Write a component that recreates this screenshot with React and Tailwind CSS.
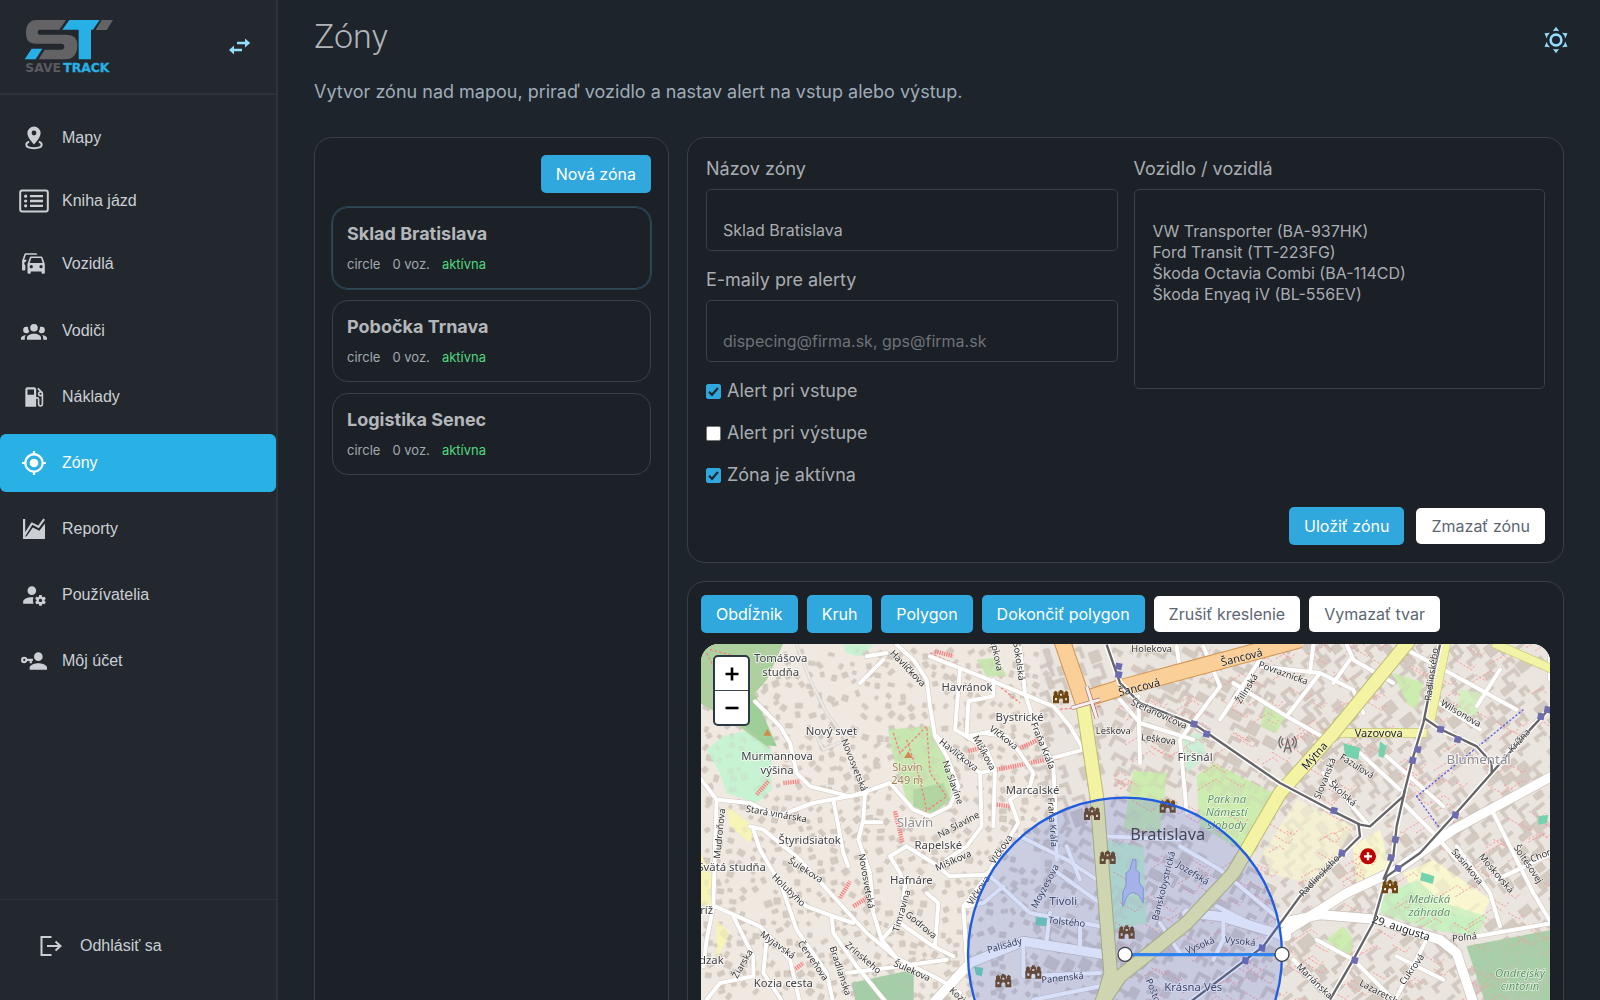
import { useState } from 'react'
import clsx from 'clsx'

const ICONS = {
  cars: 'M8 11L9.5 6.5H18.5L20 11M18.5 16A1.5 1.5 0 0 1 17 14.5A1.5 1.5 0 0 1 18.5 13A1.5 1.5 0 0 1 20 14.5A1.5 1.5 0 0 1 18.5 16M9.5 16A1.5 1.5 0 0 1 8 14.5A1.5 1.5 0 0 1 9.5 13A1.5 1.5 0 0 1 11 14.5A1.5 1.5 0 0 1 9.5 16M19.92 6C19.71 5.4 19.14 5 18.5 5H9.5C8.86 5 8.29 5.4 8.08 6L6 12V20A1 1 0 0 0 7 21H8A1 1 0 0 0 9 20V19H19V20A1 1 0 0 0 20 21H21A1 1 0 0 0 22 20V12L19.92 6M14.92 3C14.71 2.4 14.14 2 13.5 2H4.5C3.86 2 3.29 2.4 3.08 3L1 9V17A1 1 0 0 0 2 18H3A1 1 0 0 0 4 17V12.91C3.22 12.63 2.82 11.77 3.1 11C3.32 10.4 3.87 10 4.5 10H4.57L5.27 8H3L4.5 3.5H15.09L14.92 3Z',
  group: 'M12,5.5A3.5,3.5 0 0,1 15.5,9A3.5,3.5 0 0,1 12,12.5A3.5,3.5 0 0,1 8.5,9A3.5,3.5 0 0,1 12,5.5M5,8C5.56,8 6.08,8.15 6.53,8.42C6.38,9.85 6.8,11.27 7.66,12.38C7.16,13.34 6.16,14 5,14A3,3 0 0,1 2,11A3,3 0 0,1 5,8M19,8A3,3 0 0,1 22,11A3,3 0 0,1 19,14C17.84,14 16.84,13.34 16.34,12.38C17.2,11.27 17.62,9.85 17.47,8.42C17.92,8.15 18.44,8 19,8M5.5,18.25C5.5,16.18 8.41,14.5 12,14.5C15.59,14.5 18.5,16.18 18.5,18.25V20H5.5V18.25M0,20V18.5C0,17.11 1.89,15.94 4.45,15.6C3.86,16.28 3.5,17.22 3.5,18.25V20H0M24,20H20.5V18.25C20.5,17.22 20.14,16.28 19.55,15.6C22.11,15.94 24,17.11 24,18.5V20Z',
  fuel: 'M18,10A1,1 0 0,1 17,9A1,1 0 0,1 18,8A1,1 0 0,1 19,9A1,1 0 0,1 18,10M12,10H6V5H12M19.77,7.23L19.78,7.22L16.06,3.5L15,4.56L17.11,6.67C16.17,7 15.5,7.93 15.5,9A2.5,2.5 0 0,0 18,11.5C18.36,11.5 18.69,11.42 19,11.29V18.5A1,1 0 0,1 18,19.5A1,1 0 0,1 17,18.5V14A2,2 0 0,0 15,12H14V5A2,2 0 0,0 12,3H6A2,2 0 0,0 4,5V21H14V13.5H15.5V18.5A2.5,2.5 0 0,0 18,21A2.5,2.5 0 0,0 20.5,18.5V9C20.5,8.31 20.22,7.68 19.77,7.23Z',
  target: 'M12,8A4,4 0 0,1 16,12A4,4 0 0,1 12,16A4,4 0 0,1 8,12A4,4 0 0,1 12,8M3.05,13H1V11H3.05C3.5,6.83 6.83,3.5 11,3.05V1H13V3.05C17.17,3.5 20.5,6.83 20.95,11H23V13H20.95C20.5,17.17 17.17,20.5 13,20.95V23H11V20.95C6.83,20.5 3.5,17.17 3.05,13M12,5A7,7 0 0,0 5,12A7,7 0 0,0 12,19A7,7 0 0,0 19,12A7,7 0 0,0 12,5Z',
  chart: 'M1 2H3.2V15L9.6 5.2L16.2 8.6L21.4 1.6L23 2.8L16.8 11.2L10.4 7.8L3.2 19.2V19.8L4.8 19L10.8 10.6L17.4 13.8L23 6.6V22H1Z',
  userCog: 'M10 4A4 4 0 0 0 6 8A4 4 0 0 0 10 12A4 4 0 0 0 14 8A4 4 0 0 0 10 4M17 12C16.87 12 16.76 12.09 16.74 12.21L16.55 13.53C16.25 13.66 15.96 13.82 15.7 14L14.46 13.5C14.35 13.5 14.22 13.5 14.15 13.63L13.15 15.36C13.09 15.47 13.11 15.6 13.21 15.68L14.27 16.5C14.25 16.67 14.24 16.83 14.24 17C14.24 17.17 14.25 17.33 14.27 17.5L13.21 18.32C13.12 18.4 13.09 18.53 13.15 18.64L14.15 20.37C14.21 20.5 14.34 20.5 14.46 20.5L15.7 20C15.96 20.18 16.24 20.35 16.55 20.47L16.74 21.79C16.76 21.91 16.86 22 17 22H19C19.11 22 19.22 21.91 19.24 21.79L19.43 20.47C19.73 20.34 20 20.18 20.27 20L21.5 20.5C21.63 20.5 21.76 20.5 21.83 20.37L22.83 18.64C22.89 18.53 22.86 18.4 22.77 18.32L21.7 17.5C21.72 17.33 21.74 17.17 21.74 17C21.74 16.83 21.73 16.67 21.7 16.5L22.76 15.68C22.85 15.6 22.88 15.47 22.82 15.36L21.82 13.63C21.76 13.5 21.63 13.5 21.5 13.5L20.27 14C20 13.82 19.73 13.65 19.42 13.53L19.23 12.21C19.22 12.09 19.11 12 19 12H17M10 14C5.58 14 2 15.79 2 18V20H11.68A7 7 0 0 1 11 17A7 7 0 0 1 11.64 14.09C11.11 14.03 10.56 14 10 14M18 15.5C18.83 15.5 19.5 16.17 19.5 17C19.5 17.83 18.83 18.5 18 18.5C17.16 18.5 16.5 17.83 16.5 17C16.5 16.17 17.17 15.5 18 15.5Z',
  userKey: 'M11 10V12H10V14H8V12H5.83C5.42 13.17 4.31 14 3 14A3 3 0 0 1 0 11A3 3 0 0 1 3 8C4.31 8 5.42 8.83 5.83 10H11M3 10A1 1 0 0 0 2 11A1 1 0 0 0 3 12A1 1 0 0 0 4 11A1 1 0 0 0 3 10M16 14C18.67 14 24 15.34 24 18V20H8V18C8 15.34 13.33 14 16 14M16 12A4 4 0 0 1 12 8A4 4 0 0 1 16 4A4 4 0 0 1 20 8A4 4 0 0 1 16 12Z',
  sun: 'M12,7A5,5 0 0,1 17,12A5,5 0 0,1 12,17A5,5 0 0,1 7,12A5,5 0 0,1 12,7M12,9A3,3 0 0,0 9,12A3,3 0 0,0 12,15A3,3 0 0,0 15,12A3,3 0 0,0 12,9M12,2L14.39,5.42C13.65,5.15 12.84,5 12,5C11.16,5 10.35,5.15 9.61,5.42L12,2M3.34,7L7.5,6.65C6.9,7.16 6.36,7.78 5.94,8.5C5.5,9.24 5.25,10 5.11,10.79L3.34,7M3.36,17L5.12,13.23C5.26,14 5.53,14.78 5.95,15.5C6.37,16.24 6.91,16.86 7.5,17.37L3.36,17M20.65,7L18.88,10.79C18.74,10 18.47,9.23 18.05,8.5C17.63,7.78 17.1,7.15 16.5,6.64L20.65,7M20.64,17L16.5,17.36C17.09,16.85 17.62,16.22 18.04,15.5C18.46,14.77 18.73,14 18.87,13.21L20.64,17M12,22L9.59,18.56C10.33,18.83 11.14,19 12,19C12.82,19 13.63,18.83 14.37,18.56L12,22Z',
}

function Icon({ name, className = 'size-[26px]' }) {
  return (
    <svg viewBox="0 0 24 24" fill="currentColor" className={className} aria-hidden="true">
      <path d={ICONS[name]} />
    </svg>
  )
}

function PinIcon() {
  return (
    <svg viewBox="0 0 18 24" fill="none" className="h-6 w-[18px]" aria-hidden="true">
      <path
        fill="currentColor"
        fillRule="evenodd"
        d="M9 0.5A6.6 6.6 0 0 1 15.6 7.1C15.6 11 12 15.2 9 18.6C6 15.2 2.4 11 2.4 7.1A6.6 6.6 0 0 1 9 .5M9 4.6A2.4 2.4 0 1 0 9 9.4A2.4 2.4 0 1 0 9 4.6Z"
      />
      <path d="M4.2 15.6C2.4 16.2 1.3 17.3 1.3 18.6C1.3 20.8 4.7 22.2 9 22.2S16.7 20.8 16.7 18.6C16.7 17.3 15.6 16.2 13.8 15.6" stroke="currentColor" strokeWidth="2" />
    </svg>
  )
}

function ListIcon() {
  return (
    <svg viewBox="0 0 30 24" fill="none" stroke="currentColor" className="h-6 w-[30px]" aria-hidden="true">
      <rect x="1.2" y="1.5" width="27.6" height="21" rx="2" strokeWidth="2" />
      <path d="M11 7.2H24M11 12H24M11 16.8H24" strokeWidth="2.3" />
      <path d="M6.6 7.2h.1M6.6 12h.1M6.6 16.8h.1" strokeWidth="3.2" strokeLinecap="round" />
    </svg>
  )
}

const NAV = [
  [
    { label: 'Mapy', icon: <PinIcon /> },
    { label: 'Kniha jázd', icon: <ListIcon /> },
    { label: 'Vozidlá', icon: <Icon name="cars" /> },
  ],
  [
    { label: 'Vodiči', icon: <Icon name="group" /> },
    { label: 'Náklady', icon: <Icon name="fuel" /> },
    { label: 'Zóny', icon: <Icon name="target" />, active: true },
    { label: 'Reporty', icon: <Icon name="chart" className="size-6" /> },
    { label: 'Používatelia', icon: <Icon name="userCog" /> },
    { label: 'Môj účet', icon: <Icon name="userKey" /> },
  ],
]

const ZONES = ['Sklad Bratislava', 'Pobočka Trnava', 'Logistika Senec']

const VEHICLES = [
  'VW Transporter (BA-937HK)',
  'Ford Transit (TT-223FG)',
  'Škoda Octavia Combi (BA-114CD)',
  'Škoda Enyaq iV (BL-556EV)',
]

function Logo() {
  return (
    <svg viewBox="72 56 276 174" className="h-[58px] w-[92px]" role="img" aria-label="SaveTrack">
      <path fill="#636366" d="M198 62L178 91H119C111 91 111 106 119 106H196C222 106 232 118 232 138C232 162 222 180 196 180H116L134 151H184C196 151 196 133 184 133H108C86 133 78 122 78 102C78 76 88 62 112 62Z" />
      <path fill="#27b0e6" d="M208 62H299L279 91H273V180H236V91H187Z" />
      <path fill="#636366" d="M305 62H339L320 92H287Z" />
      <path fill="#27b0e6" d="M95 148H127L107 180H74Z" />
      <g fontFamily="DejaVu Sans" fontWeight="700" fontSize="37">
        <text x="76" y="217" fill="#5b5b5f">SAVE</text>
        <text x="190" y="217" fill="#27b0e6" stroke="#27b0e6" strokeWidth="1">TRACK</text>
      </g>
    </svg>
  )
}

function Sidebar() {
  return (
    <aside className="flex w-[278px] shrink-0 flex-col border-r-2 border-[#2e333b] bg-[#23282f] font-['Liberation_Sans',Arial,sans-serif] text-base text-[#cbcfd4]">
      <div className="flex h-[95px] items-center justify-between border-b-2 border-[#2e333b] px-6">
        <Logo />
        <button type="button" aria-label="Zbaliť menu" className="text-[#94dcfb]">
          <svg viewBox="0 0 24 18" fill="currentColor" className="h-[18px] w-6">
            <path d="M9 3.7H17V.5L22.2 5L17 9.5V6.3H9ZM14 10.7H6V7.5L1 12L6 16.5V13.3H14Z" />
          </svg>
        </button>
      </div>
      <nav className="flex flex-1 flex-col gap-[11px] pt-[15px]">
        {NAV.map((items, i) => (
          <div key={i} className="flex flex-col gap-2">
            {items.map((item) => (
              <a
                key={item.label}
                href="#"
                className={clsx(
                  'flex items-center rounded-md',
                  i === 0 ? 'h-[55px]' : 'h-[58px]',
                  item.active && 'bg-[#29b1e6] text-white'
                )}
              >
                <span className="flex w-[62px] shrink-0 justify-center pl-1.5">{item.icon}</span>
                {item.label}
              </a>
            ))}
          </div>
        ))}
      </nav>
      <div className="flex h-[101px] items-center border-t border-[#2e333b] pb-2 pl-10">
        <a href="#" className="flex items-center gap-4">
          <svg viewBox="0 0 24 24" fill="none" stroke="currentColor" strokeWidth="2" className="size-6">
            <path d="M11.5 3H1.5V21H11.5M7 12H20.5M15.5 7.5L20.5 12L15.5 16.5" />
          </svg>
          Odhlásiť sa
        </a>
      </div>
    </aside>
  )
}

function Button({ light, children }) {
  return (
    <button
      type="button"
      className={clsx(
        'rounded-[5px] px-[15px] text-base',
        light ? 'h-9 bg-white text-[#5d6673]' : 'h-[38px] bg-[#30a7dd] text-white'
      )}
    >
      {children}
    </button>
  )
}

function ZoneList() {
  return (
    <section className="w-[355px] shrink-0 rounded-[18px] border border-[#3a4047] bg-[#1c2127] p-[17px]">
      <div className="flex justify-end">
        <Button>Nová zóna</Button>
      </div>
      <ul className="mt-[14px] flex flex-col gap-[11px]">
        {ZONES.map((name, i) => (
          <li key={name}>
            <button
              type="button"
              className={clsx(
                'flex h-[82px] w-full flex-col justify-center gap-2 rounded-2xl border px-[14px] text-left',
                i === 0 ? 'border-[#2f4b5b] ring-1 ring-[#2a3f4c]' : 'border-[#3a4047]'
              )}
            >
              <strong className="text-lg leading-6 font-bold text-[#b4b7ba]">{name}</strong>
              <span className="flex gap-3 text-[13px] leading-5 text-[#a2a9b1]">
                <span>circle</span>
                <span>0 voz.</span>
                <span className="text-[#4fd67c]">aktívna</span>
              </span>
            </button>
          </li>
        ))}
      </ul>
    </section>
  )
}

function TextField({ id, label, ...props }) {
  return (
    <div>
      <label htmlFor={id} className="block h-8 text-lg leading-6">{label}</label>
      <input
        id={id}
        type="text"
        className="block h-[62px] w-full rounded-[5px] border border-[#3a4047] bg-[#1b1f26] px-4 pt-5 text-base text-[#a9adb2] placeholder:text-[#6d7279]"
        {...props}
      />
    </div>
  )
}

function CheckField({ label, checked }) {
  const [on, setOn] = useState(checked)
  return (
    <label className="flex h-6 items-center gap-1.5 text-lg">
      <span className="relative flex size-[15px]">
        <input
          type="checkbox"
          checked={on}
          onChange={() => setOn(!on)}
          className="size-[15px] appearance-none rounded-xs border border-[#767676] bg-white checked:border-[#30a7dd] checked:bg-[#30a7dd]"
        />
        {on && (
          <svg viewBox="0 0 15 15" fill="none" stroke="#1c2933" strokeWidth="2.2" className="pointer-events-none absolute inset-0">
            <path d="M3 7.8L6 10.8L12 4" />
          </svg>
        )}
      </span>
      {label}
    </label>
  )
}

function ZoneForm() {
  const [name, setName] = useState('Sklad Bratislava')
  return (
    <form className="rounded-[18px] border border-[#3a4047] bg-[#1c2127] px-[18px] pt-[19px] pb-[17px] text-[#a9adb2]">
      <div className="grid grid-cols-2 gap-4">
        <div>
          <TextField id="zone-name" label="Názov zóny" value={name} onChange={(e) => setName(e.target.value)} />
          <div className="mt-[17px]">
            <TextField id="zone-mails" label="E-maily pre alerty" placeholder="dispecing@firma.sk, gps@firma.sk" />
          </div>
          <div className="mt-[17px] flex flex-col gap-[18px]">
            <CheckField label="Alert pri vstupe" checked />
            <CheckField label="Alert pri výstupe" checked={false} />
            <CheckField label="Zóna je aktívna" checked />
          </div>
        </div>
        <div>
          <label htmlFor="zone-cars" className="block h-8 text-lg leading-6">Vozidlo / vozidlá</label>
          <select
            id="zone-cars"
            multiple
            className="block h-[200px] w-full rounded-[5px] border border-[#3a4047] bg-[#1b1f26] px-4 pt-[31px] text-base leading-[21px] [scrollbar-width:none]"
          >
            {VEHICLES.map((v) => (
              <option key={v} className="h-[21px] px-0.5">{v}</option>
            ))}
          </select>
        </div>
      </div>
      <div className="mt-5 flex items-center justify-end gap-3">
        <Button>Uložiť zónu</Button>
        <Button light>Zmazať zónu</Button>
      </div>
    </form>
  )
}

// ---- map ----

function random(seed) {
  let s = seed
  return () => {
    s = (s * 16807) % 2147483647
    return s / 2147483647
  }
}

function makeBuildings() {
  const rnd = random(77)
  const out = []
  for (let y = 30; y < 1380; y += 31) {
    for (let x = 10; x < 1050; x += 34) {
      if (rnd() < 0.25) continue
      const w = Math.round(9 + rnd() * 12)
      const h = Math.round(9 + rnd() * 10)
      out.push({ x: x + rnd() * 14, y: y + rnd() * 14, r: Math.round(rnd() * 90 - 45), d: `h${w}v${h}h${-w}z` })
    }
  }
  // the dense centre is made of L-shaped and courtyard blocks
  for (let y = 20; y < 1380; y += 44) {
    for (let x = 1040; x < 2560; x += 50) {
      const kind = rnd()
      if (kind < 0.14) continue
      const w = Math.round(24 + rnd() * 26)
      const h = Math.round(16 + rnd() * 22)
      const t = 9
      const d =
        kind < 0.5
          ? `h${w}v${t}h${t - w}v${h - t}h${-t}z`
          : kind < 0.75
            ? `h${w}v${h}h${-t}v${t - h}h${2 * t - w}v${h - t}h${-t}z`
            : `h${w}v${h}h${-w}z`
      const r = x > 1700 ? -38 : x < 1230 && y < 520 ? 70 : 28
      out.push({ x: x + rnd() * 16, y: y + rnd() * 12, r, d })
    }
  }
  return out
}

function makePaths() {
  const rnd = random(1234)
  const out = []
  for (let i = 0; i < 380; i++) {
    const x = 1230 + rnd() * 1330
    const y = 10 + rnd() * 1350
    const dx = 20 + rnd() * 38
    const dy = dx * 0.6
    out.push(rnd() < 0.5 ? `M${x} ${y}l${dx} ${dy}l14 -16` : `M${x} ${y}l${dx} ${-dy}l18 14`)
  }
  return out.join('')
}

const BUILDINGS = makeBuildings()
const FOOTPATHS = makePaths()

const STREETS = [
  'M165 185L240 260L270 310L290 400L330 440L450 470L500 455L570 430L640 510L690 530L750 500L775 440L740 350L705 290L690 200L680 120L640 60L590 15',
  'M0 415L50 480L150 490L230 530L340 490L500 460',
  'M495 460L490 540L475 600L510 700L520 820L545 900L590 955M490 548H545',
  'M150 560L190 570L300 660L400 770L500 880L590 955L720 1020L780 1060',
  'M160 570L180 630L245 740L290 870L380 1000L400 1090',
  'M245 740L320 800L400 830L460 850M395 830L400 880L470 980L560 1090',
  'M50 480L45 620L40 800L20 900L10 980',
  'M45 800L180 860L270 960L300 1090M100 830L160 950L160 1010L60 1030L20 1080M200 900L190 1000L250 1090',
  'M710 290L840 400L845 560L800 620L740 660M885 390L880 560M840 400L885 390L860 330L800 290',
  'M780 90L765 270L800 290L870 275M805 185L800 290M805 185L880 170V120',
  'M690 50L880 125L1060 200L1110 260L1150 330L1040 360',
  'M960 20L975 160L1000 240L1060 380L1065 480L1070 660',
  'M850 280L920 290L960 340L1000 400L990 440L930 480L955 550L900 640L860 710L790 800L800 960',
  'M620 620L700 670L750 710L860 705M620 620L570 650L600 700L615 740L600 840L545 900',
  'M600 850L700 920L760 950M680 760L715 790L705 920M550 60L480 130M560 40L500 50',
  'M400 480L430 640L445 680M740 960L560 985L440 1000',
  'M960 590L1100 660L1190 720M1100 620L1140 720M860 700L990 820L1200 860M1060 690L1200 790M1050 820L1040 900M1140 850V920',
  'M970 900V1010L1200 1000M1000 1080L1200 1040M1215 590L1440 600M800 800L850 790L910 740',
  'M1430 20L1440 90M1320 370L1315 170M1510 20L1560 140L1440 300L1460 520',
  'M1260 180L1320 250L1480 300M1680 60L1560 240M1860 100L1760 230M1680 80L1860 100L1960 150L1990 220',
  'M1600 130L1760 230L1900 310M1840 15L1830 100M1950 60L1900 130M1940 15L1960 60L2080 130',
  'M2120 30L2250 100L2450 210M2400 90L2330 200M2200 180L2340 270M2060 350L2230 500M1980 340L2100 450M1870 400L2000 550',
  'M2110 490L2200 580L2270 660M2270 620L2370 760L2400 860M2380 520L2500 760L2560 860M2390 720L2560 640M2330 890L2560 850',
  'M1440 620L1560 690L1740 840M1380 850L1440 940M1550 800L1750 900M1570 820V900L1540 960',
  'M1850 900L1960 960L2090 1090M1780 960L1900 1090M2180 900L2080 1090M2090 950L2230 1020M2550 20V120',
]

const MAIN_STREETS = [
  'M690 1100L810 970L970 905L1215 945',
  'M1750 880L1940 760L2090 690L2260 570L2555 410',
  'M1740 850L1860 825L2040 840L2120 870L2220 900L2270 940L2320 1090',
  'M1460 820L1560 830L1760 890',
]

const RAILS = [
  'M1220 15L1260 130L1320 190L1485 255L1740 430L1900 515L1980 555L2010 560L2110 470L2140 350L2170 250L2190 150L2220 15',
  'M1975 550L1980 590L1960 610L1800 770L1690 920L1480 1080L1380 1150',
  'M2172 235L2220 268L2330 320L2375 370V400L2260 530L2160 640L2060 710L2020 850L1960 960L1890 1080',
  'M2115 450L2090 560L2080 650L2050 720M2555 200L2490 270L2375 400',
]

const STOPS = [
  [1256, 80], [1256, 105], [1482, 253], [1520, 283], [1902, 513], [1926, 640], [2222, 269], [2273, 299], [2153, 329],
  [2138, 362], [2086, 600], [2073, 654], [2094, 686], [2266, 526], [2523, 230], [2543, 210], [1964, 962], [1636, 963], [1686, 925],
]

const CASTLES = [[1083, 172], [1176, 522], [1223, 654], [1280, 878], [1000, 998], [910, 1024], [1403, 500], [2070, 742]]

// x, y, text
const PLACES = [
  [242, 68, 'Tomášova'], [242, 110, 'studňa'], [394, 286, 'Nový svet'], [231, 361, 'Murmannova'], [231, 402, 'výšina'],
  [801, 153, 'Havránok'], [959, 244, 'Bystrické'], [998, 462, 'Marcalské'], [715, 627, 'Rapelské'],
  [329, 612, 'Štyridsiatok'], [95, 694, 'Svätá studňa'], [634, 733, 'Hafnáre'], [1090, 797, 'Tivoli'],
  [250, 1042, 'Kozia cesta'], [20, 822, 'ríž'], [34, 972, 'dzak'], [1485, 364, 'Firšnál'], [1480, 1054, 'Krásna Ves'],
]

// x, y, rotation, text
const STREET_NAMES = [
  [620, 90, 46, 'Havlíčkova'], [773, 350, 38, 'Havlíčkova'], [458, 378, 68, 'Novosvetská'], [494, 725, 80, 'Novosvetská'],
  [753, 430, 70, 'Na Slavíne'], [778, 560, -28, 'Na Slavíne'], [848, 342, 62, 'Mišíkova'], [762, 668, -24, 'Mišíkova'],
  [908, 298, 38, 'Vlčkova'], [908, 632, -56, 'Vlčkova'], [840, 755, -56, 'Vlčkova'], [1024, 320, 68, 'Fraňa Kráľa'],
  [1052, 548, 86, 'Fraňa Kráľa'], [228, 528, 10, 'Stará vinárska'], [64, 582, -84, 'Mudroňova'], [314, 696, 32, 'Šulekova'],
  [634, 998, 24, 'Šulekova'], [262, 755, 44, 'Holubyho'], [230, 920, 36, 'Myjavská'], [335, 966, 55, 'Červeňova'],
  [486, 958, 40, 'Zrínskeho'], [416, 995, 72, 'Bradlianska'], [132, 975, -60, 'Žiarska'], [610, 815, -74, 'Timravina'],
  [660, 860, 40, 'Godrova'], [1040, 742, -62, 'Moyzesova'], [1100, 852, 6, 'Tolstého'], [915, 922, -16, 'Palisády'],
  [1088, 1020, -6, 'Panenská'], [885, 48, 78, 'epkova'], [952, 66, 82, 'Sokolská'], [775, 1075, 42, 'Kozia'],
  [1355, 34, 0, 'Holekova'], [1375, 228, 24, 'Štefanovičova'], [1240, 280, 0, 'Leškova'], [1375, 304, 8, 'Leškova'],
  [1645, 150, -58, 'Žilinská'], [1748, 105, 20, 'Povraznícka'], [1880, 418, -68, 'Slovanská'], [1925, 465, 42, 'Školská'],
  [1968, 384, 32, 'Fazuľová'], [2200, 105, -82, 'Radlinského'], [2280, 226, 30, 'Wilsonova'], [2462, 306, -48, 'Krížna'],
  [1862, 712, -46, 'Radlinského'], [2298, 684, 50, 'Sasinkova'], [2385, 704, 50, 'Moskovská'], [2480, 676, 56, 'Šoltésovej'],
  [2294, 898, -6, 'Poľná'], [2140, 992, -54, 'Cukrová'], [1840, 1028, 44, 'Mariánska'], [2040, 1065, 28, 'Lazaretská'],
  [1396, 740, -76, 'Banskobystrická'], [1476, 705, 32, 'Jozefská'], [1502, 922, -22, 'Vysoká'], [1620, 910, 6, 'Vysoká'],
  [1360, 1068, 68, 'Poštová'], [2530, 650, -22, 'Chorv'],
]

const GREENS = [
  ['#add19e', 'M0 10H250L200 120L165 160L215 300L200 330L120 260L0 190Z'],
  ['#9bcf95', 'M90 220L165 170L230 320L195 315Z'],
  ['#c7f3d2', 'M20 330L70 290L135 275L215 330V450L170 490L80 460L60 400Z'],
  ['#c8e6b0', 'M565 270L690 260L720 330L755 390L750 480L690 525L620 480L580 350Z'],
  ['#add19e', 'M640 450L730 430L750 480L700 520L640 500Z'],
  ['#a5cda8', 'M455 1030L640 990L640 1100H470Z'],
  ['#cdebb0', 'M1300 395L1400 400L1380 580L1270 570Z'],
  ['#c9efc8', 'M1215 600L1330 620L1340 850L1240 870Z'],
  ['#cdebb0', 'M1490 410L1540 370L1720 460L1640 640L1500 560Z'],
  ['#cdeed6', 'M1450 290L1500 280L1520 350L1460 400Z'],
  ['#cdebb0', 'M1700 190L1760 220L1730 280L1680 260Z'],
  ['#f3f0d4', 'M1790 480L1960 560L1860 740L1710 700L1690 640Z'],
  ['#f8f6cf', 'M1960 620L2040 570L2070 690L1970 740Z'],
  ['#f8f6cf', 'M2110 700L2200 660L2370 780L2340 840L2170 800Z'],
  ['#c8f0c0', 'M2050 770L2150 720L2230 790L2360 830L2330 890L2200 870L2040 820Z'],
  ['#a9cfa8', 'M2300 920L2560 870V1100H2360Z'],
  ['#cdebb0', 'M1880 900L1930 860L1960 900L1950 960Z'],
  ['#d5efc0', 'M2280 150L2350 160L2330 230L2270 210Z'],
  ['#cdebb0', 'M2080 100L2170 130L2150 210L2120 190Z'],
  ['#c8e6b0', 'M830 60L890 55L920 110L860 110Z'],
  ['#c7f3d2', 'M430 15H520L480 50L440 40Z'],
  ['#f7f4b8', 'M80 500L160 560L150 610L90 560ZM3 640L40 720L30 810L3 790ZM50 840L90 880L50 960Z'],
]

function ZoneMap() {
  return (
    <svg viewBox="3 13 2547 1350" preserveAspectRatio="xMidYMin slice" className="h-[450px] w-full rounded-[18px]" role="img" aria-label="Mapa zóny">
      <rect x="-500" width="3600" height="1400" fill="#efe9e1" />
      <rect x="1020" width="1600" height="1400" fill="#ebe5df" />
      {GREENS.map(([fill, d]) => (
        <path key={d} d={d} fill={fill} />
      ))}
      <g fill="#cdc3bb" stroke="#b9aca2" strokeWidth="1.5" opacity="0.8">
        {BUILDINGS.map(({ x, y, r, d }, i) => (
          <path key={i} d={`M0 0${d}`} transform={`translate(${x} ${y}) rotate(${r})`} />
        ))}
      </g>
      {GREENS.map(([fill, d]) => (
        <path key={d} d={d} fill={fill} opacity="0.72" />
      ))}
      <path d={FOOTPATHS} fill="none" stroke="#f79a9a" strokeWidth="3" strokeDasharray="7 5" />
      <path d="M690 40L880 125L960 190M580 280L600 340L680 260L690 400L740 470L670 520M620 300L660 420L680 510M20 40L60 120L130 200M30 30L150 60M1200 200L1060 210" fill="none" stroke="#f47d7d" strokeWidth="4" strokeDasharray="8 6" />
      <path d="M170 465L205 425M250 430L300 425M805 335L840 325M890 390L1080 352M960 325L1020 298M890 495L930 500M585 515L608 610M420 775L450 725M460 800L500 775M270 1000L310 970M705 35L760 50" fill="none" stroke="#fa8080" strokeWidth="13" strokeDasharray="4 3" />

      <g fill="none" strokeLinejoin="round" strokeLinecap="round">
        {STREETS.map((d) => <path key={d} d={d} stroke="#cfc8c0" strokeWidth="15" />)}
        {MAIN_STREETS.map((d) => <path key={d} d={d} stroke="#c8c1ba" strokeWidth="32" />)}
        {STREETS.map((d) => <path key={d} d={d} stroke="#fff" strokeWidth="12" />)}
        {MAIN_STREETS.map((d) => <path key={d} d={d} stroke="#fff" strokeWidth="28" />)}
        <path d="M290 15L330 120L380 220L440 300L370 330L350 290" stroke="#d4d0ca" strokeWidth="10" />
        <path d="M290 15L330 120L380 220L440 300L370 330L350 290" stroke="#eeebe7" strokeWidth="6" />
        <path d="M2150 470L2470 210" stroke="#5555e8" strokeWidth="4" strokeDasharray="3 9" />
        <path d="M2150 470L2215 560" stroke="#5555e8" strokeWidth="4" strokeDasharray="3 9" />
      </g>

      <g fill="none" strokeLinejoin="round">
        <path d="M2240 5L2190 250M2380 10L2560 90M1900 280H2180" stroke="#c9c772" strokeWidth="28" />
        <path d="M2240 5L2190 250M2380 10L2560 90M1900 280H2180" stroke="#f3f3a6" strokeWidth="24" />
        <path d="M1148 190L1190 470L1232 1000L1215 1060L1200 1100" stroke="#bdbb72" strokeWidth="44" />
        <path d="M2130 0L1900 280L1740 460L1600 700L1460 850L1260 1010L1200 1100" stroke="#bdbb72" strokeWidth="44" />
        <path d="M1148 190L1190 470L1232 1000L1215 1060L1200 1100" stroke="#f4f3a4" strokeWidth="38" />
        <path d="M2130 0L1900 280L1740 460L1600 700L1460 850L1260 1010L1200 1100" stroke="#f4f3a4" strokeWidth="38" />
        <path d="M1085 0L1152 195M1165 175L1260 145L1800 0" stroke="#cf9350" strokeWidth="52" />
        <path d="M1085 0L1152 195M1165 175L1260 145L1800 0" stroke="#fbcf98" strokeWidth="46" />
        <path d="M1160 140L1190 235M1115 205L1200 180" stroke="#a96b6b" strokeWidth="13" />
        <path d="M1160 140L1190 235M1115 205L1200 180" stroke="#f6efef" strokeWidth="9" />
        {RAILS.map((d) => <path key={d} d={d} stroke="#fff" strokeWidth="16" />)}
        {RAILS.map((d) => <path key={d} d={d} stroke="#656567" strokeWidth="7" />)}
      </g>

      <path d="M1298 660H1308V690L1318 700V730L1330 745V790L1318 770A20 20 0 0 0 1282 770L1268 800V760L1278 735V700L1290 690Z" fill="#bfc7ea" stroke="#8fa0d8" strokeWidth="3" />
      <g fill="#74d3ae">
        <path d="M1930 310L1980 325L1975 360L1935 350ZM2040 305L2060 320L2050 355L2035 350ZM2165 698L2203 710L2198 733L2160 722ZM2515 530L2545 525L2540 550L2515 555ZM1007 832L1042 835L1038 860L1007 857ZM822 980L850 985L845 1010L828 1005Z" />
      </g>

      {STOPS.map(([x, y]) => (
        <rect key={`${x}-${y}`} x={x - 10} y={y - 10} width="20" height="20" fill="#6c6cae" transform={`rotate(12 ${x} ${y})`} />
      ))}

      <g fontFamily="Noto Sans, sans-serif" textAnchor="middle" stroke="#fff" strokeOpacity="0.7" paintOrder="stroke" strokeLinejoin="round">
        <g fontSize="28" fill="#333" strokeWidth="4">
          {STREET_NAMES.map(([x, y, r, t]) => (
            <text key={`${x}-${t}`} transform={`translate(${x} ${y}) rotate(${r})`} y="4">{t}</text>
          ))}
        </g>
        <g fontSize="34" fill="#444448" strokeWidth="6">
          {PLACES.map(([x, y, t]) => (
            <text key={t} x={x} y={y}>{t}</text>
          ))}
        </g>
        <g fontSize="33" fill="#222" strokeWidth="2">
          <text transform="translate(1628 64) rotate(-14)">Šancová</text>
          <text transform="translate(1320 154) rotate(-14)">Šancová</text>
          <text x="2036" y="291">Vazovova</text>
          <text transform="translate(1852 356) rotate(-48)">Mýtna</text>
          <text transform="translate(2100 876) rotate(18)">29. augusta</text>
        </g>
        <g fontSize="40" fill="#8f8f93" strokeWidth="6">
          <text x="645" y="561">Slavín</text>
          <text x="2336" y="374">Blumentál</text>
        </g>
        <g fontSize="33" fill="#a08050" strokeWidth="4">
          <text x="622" y="393">Slavín</text>
          <text x="622" y="432">249 m</text>
        </g>
        <g fontSize="34" fill="#5b9663" fontStyle="italic" strokeWidth="4">
          <text x="1580" y="489">Park na</text>
          <text x="1580" y="528">Námestí</text>
          <text x="1580" y="568">slobody</text>
          <text x="2188" y="791">Medická</text>
          <text x="2188" y="830">záhrada</text>
          <text x="2460" y="1011">Ondrejský</text>
          <text x="2460" y="1050">cintorín</text>
        </g>
      </g>

      <path d="M612 355L625 335L638 355ZM190 288L202 268L214 288Z" fill="#d08a50" />
      <path d="M1752 338L1763 300L1774 338M1756 325H1770M1750 318A14 14 0 0 1 1750 296M1776 318A14 14 0 0 0 1776 296M1744 326A26 26 0 0 1 1744 290M1782 326A26 26 0 0 0 1782 290" fill="none" stroke="#6b6b6b" strokeWidth="4" />
      {CASTLES.map(([x, y]) => (
        <path
          key={`${x}-${y}`}
          transform={`translate(${x} ${y})`}
          fill="#6f4710"
          d="M-22 -14L-16 -19L-10 -14V-7H-8V-17H-4V-21H4V-17H8V-7H10V-14L16 -19L22 -14V-4H24V19H6V10A6 6 0 0 0 -6 10V19H-24V-4H-22Z M-18 3V10H-12V3ZM12 3V10H18V3ZM-3 -10V-4H3V-10Z"
          fillRule="evenodd"
        />
      ))}
      <circle cx="2004" cy="650" r="24" fill="#bf0000" />
      <path d="M2004 638V662M1992 650H2016" stroke="#fff" strokeWidth="7" />

      {/* selected zone */}
      <circle cx="1275" cy="945" r="471" fill="#3b5fe0" fillOpacity="0.2" stroke="#1f5ce0" strokeWidth="7" />
      <text x="1403" y="601" fontFamily="Noto Sans, sans-serif" fontSize="49" textAnchor="middle" fill="#43475c">Bratislava</text>
      <path d="M1275 945H1746" stroke="#2f83ee" strokeWidth="10" />
      <circle cx="1275" cy="944" r="21" fill="#fff" stroke="#3a3f48" strokeWidth="4" />
      <circle cx="1746" cy="944" r="21" fill="#fff" stroke="#3a3f48" strokeWidth="4" />
    </svg>
  )
}

function MapPanel() {
  return (
    <section className="rounded-[18px] border border-[#3a4047] bg-[#1c2127] p-[13px]">
      <div className="flex flex-wrap items-center gap-[9px]">
        <Button>Obdĺžnik</Button>
        <Button>Kruh</Button>
        <Button>Polygon</Button>
        <Button>Dokončiť polygon</Button>
        <Button light>Zrušiť kreslenie</Button>
        <Button light>Vymazať tvar</Button>
      </div>
      <div className="relative mt-[11px]">
        <ZoneMap />
        <div className="absolute top-[11px] left-3 flex w-[37px] flex-col rounded-[5px] border-2 border-[#2c3a47] bg-white text-black">
          <button type="button" aria-label="Priblížiť" className="flex h-[34px] items-center justify-center border-b border-[#3b4650]">
            <svg viewBox="0 0 14 14" className="size-3.5" stroke="currentColor" strokeWidth="2.6"><path d="M7 .5V13.5M.5 7H13.5" /></svg>
          </button>
          <button type="button" aria-label="Oddialiť" className="flex h-[33px] items-center justify-center">
            <svg viewBox="0 0 14 14" className="size-3.5" stroke="currentColor" strokeWidth="2.6"><path d="M.5 7H13.5" /></svg>
          </button>
        </div>
      </div>
    </section>
  )
}

export default function App() {
  return (
    <div className="flex h-screen overflow-hidden bg-[#1e242b] font-['Inter',sans-serif]">
      <Sidebar />
      <main className="min-w-0 flex-1 overflow-y-auto px-9 [scrollbar-width:none]">
        <header className="flex justify-between">
          <div>
            <h1 className="pt-3.5 font-['Roboto',sans-serif] text-[34px] leading-[44px] font-light text-[#b1b5b9]">Zóny</h1>
            <p className="mt-5 text-lg leading-7 text-[#9facb8]">
              Vytvor zónu nad mapou, priraď vozidlo a nastav alert na vstup alebo výstup.
            </p>
          </div>
          <button type="button" aria-label="Prepnúť tému" className="-mr-2 h-20 text-[#94dcfb]">
            <Icon name="sun" className="size-8" />
          </button>
        </header>
        <div className="mt-[31px] flex gap-[18px] pb-9">
          <ZoneList />
          <div className="flex min-w-0 flex-1 flex-col gap-[18px]">
            <ZoneForm />
            <MapPanel />
          </div>
        </div>
      </main>
    </div>
  )
}
